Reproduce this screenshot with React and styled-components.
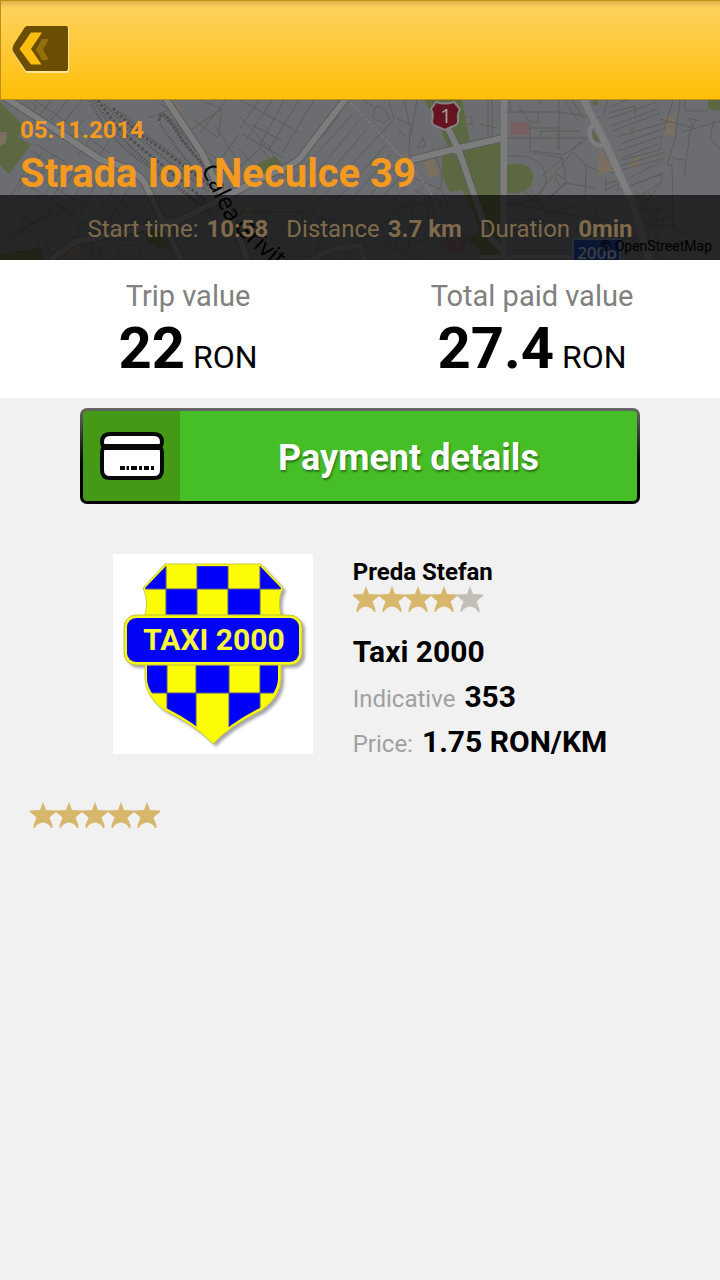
import React from 'react';
import styled, { createGlobalStyle } from 'styled-components';

const GlobalStyle = createGlobalStyle`
    * {
        box-sizing: border-box;
    }

    body {
        margin: 0;
        background-color: #f1f1f1;
        font-family: Roboto, "Liberation Sans", sans-serif;
        color: #000;
    }
`

const Page = styled.main`
    display: flex;
    flex-direction: column;
    min-height: 100vh;
`

const TopBar = styled.header`
    display: flex;
    align-items: center;
    height: 100px;
    padding: 0 10px;
    background: linear-gradient(#dfb54b, #fed25a 8%, #ffc936 50%, #ffbf06);
    border: 1px solid #bd8f12;
    border-right: none;
`

const BackButton = styled.button`
    display: flex;
    padding: 0;
    border: none;
    background: none;
    cursor: pointer;
`

const Hero = styled.section`
    position: relative;
    display: flex;
    flex-direction: column;
    height: 160px;
    overflow: hidden;
    background-color: #6c6d71;
`

const MapImage = styled.svg`
    position: absolute;
    top: 0;
    left: 0;
    width: 100%;
    height: 100%;
`

const HeroTitle = styled.div`
    position: relative;
    flex: 1;
    padding: 16px 20px 0;
    color: #f49a1e;
`

const TripDate = styled.div`
    font-size: 24px;
    line-height: 28px;
    font-weight: 700;
`

const Address = styled.h1`
    margin: 6px 0 0;
    font-size: 40px;
    line-height: 48px;
    margin-bottom: -3px;
    font-weight: 700;
`

const TripBand = styled.div`
    position: relative;
    display: flex;
    flex-shrink: 0;
    justify-content: center;
    gap: 18px;
    height: 65px;
    padding-top: 20px;
    background-color: rgba(0, 0, 0, 0.65);
    color: #7f6a4b;
    font-size: 24px;
    line-height: 28px;
`

const BandItem = styled.div`
    display: flex;
    gap: 8px;
`

const MapCredit = styled.small`
    position: absolute;
    right: 8px;
    bottom: 6px;
    color: #000;
    font-size: 14px;
    line-height: 16px;
`

const Totals = styled.section`
    display: grid;
    grid-template-columns: 1fr 1fr;
    padding: 16px 16px 18px;
    background-color: #fff;
    text-align: center;
`

const TotalLabel = styled.div`
    color: #808080;
    font-size: 29px;
    line-height: 40px;
`

const TotalValue = styled.div`
    display: flex;
    align-items: baseline;
    justify-content: center;
    gap: 8px;
    font-size: 32px;
    line-height: 36px;
`

const Amount = styled.strong`
    font-size: 58px;
    line-height: 64px;
`

const PaymentButton = styled.button`
    display: flex;
    align-self: center;
    width: calc(100% - 160px);
    height: 96px;
    margin-top: 10px;
    padding: 3px;
    border: none;
    border-radius: 7px;
    background: linear-gradient(#666, #000 60%);
    font-family: inherit;
    cursor: pointer;
`

const ButtonIcon = styled.span`
    display: flex;
    align-items: center;
    justify-content: center;
    width: 97px;
    height: 100%;
    border-radius: 4px 0 0 4px;
    background-color: #449a16;
`

const ButtonText = styled.span`
    display: flex;
    flex: 1;
    align-items: center;
    justify-content: center;
    height: 100%;
    border-radius: 0 4px 4px 0;
    padding-top: 4px;
    background-color: #46be26;
    color: #fff;
    font-size: 36px;
    font-weight: 700;
    text-shadow: 1px 2px 2px rgba(0, 0, 0, 0.4);
`

const Driver = styled.section`
    display: flex;
    justify-content: center;
    gap: 40px;
    margin-top: 50px;
`

const DriverInfo = styled.div`
    display: flex;
    flex-direction: column;
    padding-top: 4px;
`

const DriverName = styled.h2`
    margin: 0;
    font-size: 24px;
    line-height: 28px;
    font-weight: 700;
`

const Company = styled.h3`
    margin: 18px 0 0;
    font-size: 30px;
    line-height: 44px;
    font-weight: 700;
`

const Detail = styled.div`
    display: flex;
    align-items: baseline;
    gap: 9px;
    height: 45px;
    color: #a0a0a0;
    font-size: 24px;
    line-height: 45px;
`

const DetailValue = styled.strong`
    color: #000;
    font-size: 30px;
`

const StarRow = styled.div`
    display: flex;
`

const TripRating = styled.section`
    margin-top: 38px;
    padding: 0 30px;
`

const STAR_PATH = 'M13 0 L16 8 L26 8.6 V10 L19.5 15.5 L22.4 23 V26 H20.8 C20.5 23 17 21 13 20.4 C9 21 5.500 23 5.200 26 H3.600 V23 L6.500 15.500 L0 10 V8.600 L10 8 Z';

const Stars = ({ value, label }) => (
    <StarRow role="img" aria-label={label}>
        {[1, 2, 3, 4, 5].map(n => (
            <svg key={n} width="26" height="26" viewBox="0 0 26 26">
                <path d={STAR_PATH} fill={n <= value ? '#d6b76c' : '#c3beb8'} />
            </svg>
        ))}
    </StarRow>
)

const BackIcon = () => (
    <svg width="60" height="50" viewBox="11 25 60 50">
        <path d="M27 27 H67 Q69 27 69 29 V71 Q69 73 67 73 H26 L14 54 Q11 50 14 45 Z" fill="#ffe49a" />
        <path d="M27 26 H66 Q68 26 68 28 V69 Q68 71 66 71 H26 L14 53 Q11 49 14 44 L25 27 Z" fill="#6b4e02" />
        <path d="M31 32.500 H42 L31 49 L41.500 64.500 H31 L19.500 49 Z" fill="#fdbf0f" />
        <path d="M42 39 H49 L43 49.500 L49 60 H42 L36 49.500 Z" fill="#94700b" />
    </svg>
)

const CardIcon = () => (
    <svg width="64" height="48" viewBox="0 0 64 48">
        <path d="M10 2 H54 Q62 2 62 10 Q62 13 60 15 Q62 17 62 20 V38 Q62 46 54 46 H10 Q2 46 2 38 V20 Q2 17 4 15 Q2 13 2 10 Q2 2 10 2 Z" fill="#fff" stroke="#080808" strokeWidth="4" />
        <path d="M3 15 H61" stroke="#080808" strokeWidth="6" />
        <path d="M20 36 H25 M26.500 36 H29 M31 36 H37 M39 36 H42 M44 36 H49 M51 36 H54" stroke="#080808" strokeWidth="4" />
    </svg>
)

const TaxiLogo = () => (
    <svg width="200" height="200" viewBox="0 0 200 200" role="img" aria-label="Taxi 2000">
        <defs>
            <clipPath id="shield">
                <path d="M53 12 H147 L168 34 Q163 46 165 61 H35 Q37 46 32 34 Z M34 111 H165 V124 Q165 139 147 154 Q117 169 100 187 Q83 169 53 154 Q34 139 34 124 Z" />
            </clipPath>
            <filter id="soft" x="-10%" y="-10%" width="120%" height="120%">
                <feGaussianBlur stdDeviation="1.500" />
            </filter>
        </defs>
        <rect width="200" height="200" fill="#fff" />
        <g fill="#a4a4ac" transform="translate(3 3)" filter="url(#soft)">
            <path d="M52 10 H148 L170 34 Q164 46 168 61 V124 Q168 142 149 156 Q115 173 100 190 Q85 173 51 156 Q32 142 32 124 V61 Q36 46 30 34 Z" />
            <rect x="11" y="61" width="178" height="50" rx="12" />
        </g>
        <path d="M52 10 H148 L170 34 Q164 46 168 61 V124 Q168 142 149 156 Q115 173 100 190 Q85 173 51 156 Q32 142 32 124 V61 Q36 46 30 34 Z" fill="#fcfc05" stroke="#c7cd39" />
        <g clipPath="url(#shield)" fill="#0000fb" stroke="#55558c" strokeWidth="1">
            <path d="M20 12 H53 V35 H20 Z M84 12 H115 V35 H84 Z M147 12 H180 V35 H147 Z" />
            <path d="M53 35 H84 V61 H53 Z M115 35 H147 V61 H115 Z" />
            <path d="M20 111 H54 V139 H20 Z M83 111 H116 V139 H83 Z M147 111 H180 V139 H147 Z" />
            <path d="M54 139 H83 V190 H54 Z M116 139 H147 V190 H116 Z" />
        </g>
        <rect x="11" y="61" width="178" height="50" rx="12" fill="#f5f51c" stroke="#c0c43a" />
        <rect x="14" y="64" width="172" height="44" rx="9" fill="#0202f6" />
        <text x="101" y="96" fill="#f7f738" fontFamily="Roboto, 'Liberation Sans', sans-serif" fontWeight="700" fontSize="30" textAnchor="middle">TAXI 2000</text>
    </svg>
)

const CityMap = () => (
    <MapImage viewBox="0 100 720 160" preserveAspectRatio="xMidYMid slice" aria-hidden="true">
        <g fill="#5b6841">
            <path d="M0 102 L25 127 L18 137 L31 145 L9 174 L0 165 Z" />
            <path d="M424 100 H462 L470 143 L448 147 L440 128 Z" />
            <path d="M442 150 L472 148 L500 141 V260 H492 L472 210 L462 190 L450 192 L442 176 Z" />
            <path d="M507 165 Q533 160 533 178 Q531 195 507 193 Z" />
            <path d="M592 130 L600 141 L594 142 Z M593 100 H598 V105 H593 Z M708 100 H720 V111 L708 109 Z" />
            <path d="M254 165 L276 156 L284 168 L262 178 Z" />
            <path d="M145 214 L170 247 L158 248 L146 240 Z M0 254 L40 248 L44 260 H0 Z" />
            <path d="M480 203 L499 242 L490 260 H480 Z M467 239 L480 230 V250 Z" />
        </g>
        <g fill="#7b705f">
            <path d="M0 132 H7 L6 143 L0 146 Z M424 162 L434 158 L439 175 L429 178 Z M402 155 L411 152 L410 160 L402 163 Z" />
            <path d="M600 148 L614 171 L598 175 Z M629 165 L634 159 L638 156 L640 165 L629 167 Z M63 247 L85 244 L80 255 H58 Z" />
            <path d="M665 117 H675 L674 135 H664 Z M174 100 L182 112 L177 114 L169 101 Z M244 207 L255 203 L252 217 L243 215 Z" />
        </g>
        <path d="M510 122 H529 V135 H510 Z M440 240 L468 238 L465 253 L444 250 Z" fill="#77605f" />

        {/* minor streets */}
        <g fill="none" stroke="#5c5d5a" strokeWidth="1">
            <path d="M34 100 L58 116 M52 100 L32 124 M68 100 L41 132 M82 100 L49 140 M30 101 L37 107 L32 113 M58 116 L110 153 M72 112 L58 132 M84 119 L67 143 M96 131 L78 155 M110 139 L96 161" />
            <path d="M30 150 L51 164 L32 188 M36 144 L65 162 M31 160 L12 195 M42 152 L18 191 M54 154 L36 180 M66 163 L45 194 M77 168 L57 198 M88 174 L70 204 M100 176 L80 212 M117 183 L97 216 M129 188 L109 221 M24 169 L82 204 M18 179 L75 214 M48 179 L60 184 L55 194" />
            <path d="M0 202 L26 216 L20 232 L0 225 M5 240 L40 218 L56 204 L77 219 L117 239 M0 248 Q35 220 55 213 M26 217 L57 241 M37 222 L50 209 M62 208 L48 231 M72 217 L58 240 M84 222 L72 244 M99 230 L90 250 M109 200 L127 225 L110 244 M120 201 L138 214 L122 232 M80 246 L104 256 M92 241 V260 M103 246 L98 260 M121 245 H139 V258 H116 Z M45 240 L54 260 M38 242 L42 260" />
            <path d="M148 118 L169 110 L159 103 M188 132 L222 109 L200 100 M193 142 L238 174 M194 120 L218 138 L222 109 M214 124 L245 172 M203 154 L228 174 M226 100 L200 133 M239 134 L211 172" />
            <path d="M240 117 L265 144 L232 174 M240 100 L300 133 M259 100 L240 128 M272 100 L246 140 M284 100 L259 147 M299 100 L268 151 M314 100 L282 153 M242 134 L284 158 M252 125 L283 141 M238 148 L265 178 M263 150 L277 171 L289 180 M268 144 L278 166" />
            <path d="M352 115 L293 180 M358 122 L304 188 M366 130 L310 196 M376 138 L315 205 M386 145 L326 212 M391 154 L334 220 M400 161 L344 225 M407 169 L356 227 M414 178 L366 229 M425 185 L378 230 M331 124 L312 146 M340 114 L322 137" />
            <path d="M375 107 Q382 103 390 118 L384 123 L373 118 Z M389 101 L394 119 L376 139 M404 100 L410 127 L409 157 M417 100 L411 135 M397 119 L413 125 M421 141 L423 137 L425 146 L417 148 Z M398 129 L406 138 M363 100 L373 106 M466 117 H472 V124 H467 M432 147 L441 171 Q445 190 431 198 L415 190 M415 178 L442 190 L448 206" />
            <path d="M240 212 H303 L330 220 L366 237 M248 202 L240 216 M262 202 L252 212 M278 197 L264 215 M304 210 L300 240 M334 219 L315 255 M350 225 L322 260 M366 230 L346 260 M378 228 L402 208 L438 199 M394 215 L386 244 M400 214 L395 250 M414 206 L408 250 M425 204 L433 240 M382 244 L423 260 M399 250 L440 233 M440 200 L448 240 M240 234 L276 257 H330 M288 219 L270 252 M260 214 L286 233" />
            <path d="M480 124 L497 128 M492 100 V138 M488 100 V135 M507 112 L558 112 L600 118 M530 122 V153 M507 138 H541 V131 H580 M541 138 H588 M530 128 H558 V150 M518 105 L530 122 H538 V112 M559 100 V150 M510 100 V112 M540 100 V105 M532 151 L563 155 L590 137 M566 102 L577 120 M572 100 L584 119 M507 156 Q545 153 546 180 Q546 200 507 205 M533 153 L563 158 L541 177 M580 142 L527 208 M562 158 L566 179 M572 151 L585 165 L598 171 M566 182 L541 205 L524 191 M586 165 L585 205 M557 174 L567 181 L561 187 L555 178 Z M564 183 L596 188 M530 189 L547 213 L583 205 M542 205 L547 200 L567 183" />
            <path d="M608 100 L603 116 M610 107 L627 100 M607 119 L657 102 M609 113 L635 106 V118 M613 131 L660 113 M611 126 L657 109 M617 137 L668 122 M620 144 L663 129 M632 127 V133 M618 151 L662 136 L660 150 L621 160 M622 158 L658 144 M611 169 L665 152 M610 173 L665 158 M606 178 V190 L662 161 M606 184 L620 180 L617 191 L662 174" />
            <path d="M673 100 L664 130 M680 100 L675 140 L667 165 H672 L673 202 M682 132 L720 121 M660 119 L693 128 L688 118 L700 121 M696 120 L690 132 L684 177 M673 158 L683 160 M714 119 L710 138 L720 149 M685 100 V111 L708 111 M632 185 L662 173 L662 181 L628 205 M635 191 L645 204 L661 183 M641 196 L660 211 L640 228 M647 191 L668 214 L643 233 M629 205 L649 224 L673 215 M640 203 L660 221 M646 225 H675 M635 219 L652 246 M673 203 V230 L690 235 M636 210 L665 208 M656 208 V260 M506 202 L560 213 L610 221 M507 219 L567 222 M510 233 L563 238 M596 206 L593 230 L640 239" />
        </g>

        {/* rail yards */}
        <g fill="none" stroke="#505150" strokeWidth="3" strokeDasharray="1 2">
            <path d="M90 101 L106 130 L130 153 L205 208" />
            <path d="M94 100 L112 128 L138 154 L214 216" />
            <path d="M98 100 L119 129 L146 152 L206 201" strokeDasharray="3 2" />
            <path d="M105 104 L129 130 L153 149 L210 193" />
            <path d="M113 108 L139 134 L160 148 L215 190" strokeDasharray="3 2" />
            <path d="M121 112 L148 137 L172 154 L220 193" />
            <path d="M159 121 Q160 110 168 118 L182 140 L206 169" strokeDasharray="3 1" />
            <path d="M163 116 L180 132 L204 159 M160 124 L179 151 L201 177 M171 119 L190 139 L206 158" />
        </g>

        {/* main roads */}
        <g fill="none" stroke="#5b5c5b" strokeLinejoin="round">
            <path d="M0 94 L62 134 L101 160 Q142 170 147 188 L181 260" strokeWidth="8" />
            <path d="M347 97 L304 153 Q300 163 270 174 L180 220 L75 242 L50 260" strokeWidth="8" />
            <path d="M164 96 L202 153 L222 195 L248 260" strokeWidth="8" />
            <path d="M444 120 L459 151 L488 235 L502 250 M411 160 L459 148 L503 138" strokeWidth="8" />
        </g>
        <g fill="none" stroke="#7d7d7d" strokeLinejoin="round">
            <path d="M0 94 L62 134 L101 160 Q142 170 147 188 L181 260" strokeWidth="6" />
            <path d="M347 97 L304 153 Q300 163 270 174 L180 220 L75 242 L50 260" strokeWidth="6" />
            <path d="M164 96 L202 153 L222 195 L248 260" strokeWidth="6" />
            <path d="M444 120 L459 151 L488 235 L502 250 M504 97 V260 M411 160 L459 148 L503 138" strokeWidth="6" />
            <path d="M581 95 L605 142 L632 202 L650 260" strokeWidth="7" />
            <path d="M597 122 Q587 127 590 137 Q595 149 607 144" strokeWidth="4" />
            <path d="M310 260 L334 249 L360 245 L364 260 M480 257 H600" strokeWidth="4" />
        </g>
        <circle cx="457" cy="149" r="5" fill="#7d7d7d" />
        <path d="M351 103 L402 157 L430 190 L439 212 L470 260" fill="none" stroke="#888889" strokeWidth="1" strokeDasharray="3 2" />

        {/* route shields */}
        <path d="M436 102 Q445 105 454 102 L460 109 Q457 115 458 120 Q459 125 451 127 L445 130 L438 127 Q431 125 432 120 Q434 115 431 109 Z" fill="#66141f" stroke="#858084" strokeWidth="2" />
        <text x="446" y="123" fill="#aaa1a5" fontFamily="'Open Sans', sans-serif" fontSize="20" textAnchor="middle">1</text>
        <rect x="573" y="239" width="47" height="26" fill="#1b4396" stroke="#74829e" strokeWidth="2" />
        <text x="597" y="259" fill="#a5b2bf" fontFamily="'Open Sans', sans-serif" fontSize="17" fontWeight="600" textAnchor="middle">200b</text>
        <path id="calea" d="M201 169 L224 216 Q232 233 292 279" fill="none" />
        <text fill="#000" fontFamily="'Open Sans', sans-serif" fontSize="24">
            <textPath href="#calea">Calea Grivit</textPath>
        </text>
    </MapImage>
)

const trip = {
    date: '05.11.2014',
    address: 'Strada Ion Neculce 39',
    facts: [
        { label: 'Start time:', value: '10:58' },
        { label: 'Distance', value: '3.7 km' },
        { label: 'Duration', value: '0min' }
    ],
    totals: [
        { label: 'Trip value', value: '22' },
        { label: 'Total paid value', value: '27.4' }
    ]
}

class App extends React.Component {
    render() {
        return (
            <Page>
                <GlobalStyle />
                <TopBar>
                    <BackButton type="button" aria-label="Back">
                        <BackIcon />
                    </BackButton>
                </TopBar>
                <Hero>
                    <CityMap />
                    <HeroTitle>
                        <TripDate>{trip.date}</TripDate>
                        <Address>{trip.address}</Address>
                    </HeroTitle>
                    <TripBand>
                        {trip.facts.map(fact => (
                            <BandItem key={fact.label}>
                                <span>{fact.label}</span>
                                <strong>{fact.value}</strong>
                            </BandItem>
                        ))}
                        <MapCredit>© OpenStreetMap</MapCredit>
                    </TripBand>
                </Hero>
                <Totals>
                    {trip.totals.map(total => (
                        <div key={total.label}>
                            <TotalLabel>{total.label}</TotalLabel>
                            <TotalValue>
                                <Amount>{total.value}</Amount>
                                <span>RON</span>
                            </TotalValue>
                        </div>
                    ))}
                </Totals>
                <PaymentButton type="button">
                    <ButtonIcon><CardIcon /></ButtonIcon>
                    <ButtonText>Payment details</ButtonText>
                </PaymentButton>
                <Driver>
                    <TaxiLogo />
                    <DriverInfo>
                        <DriverName>Preda Stefan</DriverName>
                        <Stars value={4} label="4 out of 5" />
                        <Company>Taxi 2000</Company>
                        <Detail>Indicative<DetailValue>353</DetailValue></Detail>
                        <Detail>Price:<DetailValue>1.75 RON/KM</DetailValue></Detail>
                    </DriverInfo>
                </Driver>
                <TripRating>
                    <Stars value={5} label="5 out of 5" />
                </TripRating>
            </Page>
        );
    }
}

export default App;
